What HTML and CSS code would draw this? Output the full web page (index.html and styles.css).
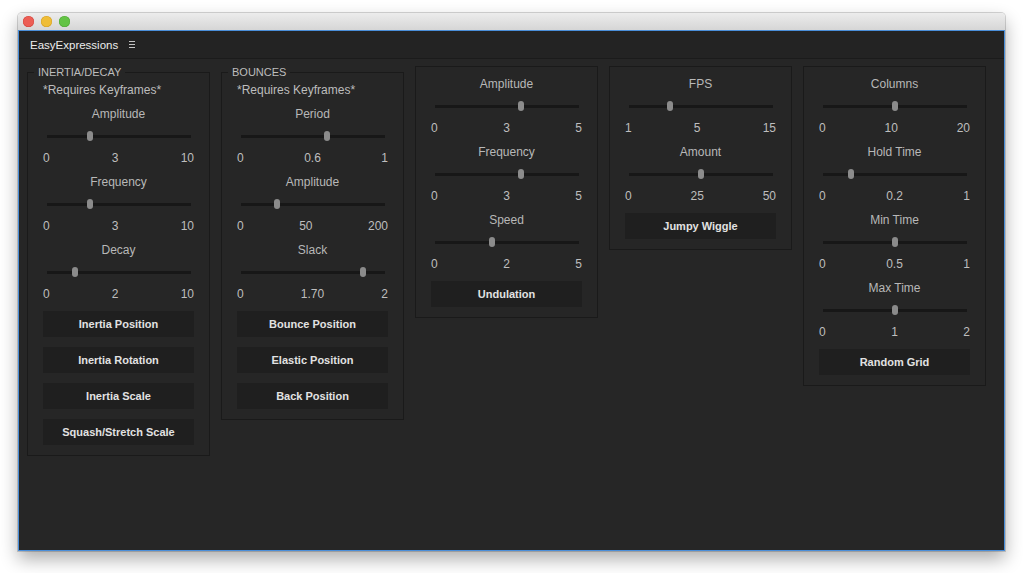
FILE: index.html
```html
<!DOCTYPE html>
<html lang="en">
<head>
<meta charset="utf-8">
<title>EasyExpressions</title>
<link rel="stylesheet" href="styles.css">
</head>
<body>
<div class="window">
  <div class="titlebar">
    <span class="light light--red"></span>
    <span class="light light--yellow"></span>
    <span class="light light--green"></span>
  </div>
  <div class="panel">
    <div class="panel-header">
      <span class="panel-title">EasyExpressions</span>
      <svg class="menu-icon" width="6" height="7" viewBox="0 0 6 7"><path d="M0 .5h6M0 3.5h6M0 6.5h6" stroke="#c4c4c4" stroke-width="1"/></svg>
    </div>
    <div class="panel-body">

      <fieldset class="group group--legend">
        <legend>INERTIA/DECAY</legend>
        <div class="note">*Requires Keyframes*</div>
        <div class="sliders">
          <div class="slider">
            <div class="slider-label">Amplitude</div>
            <div class="slider-track-wrap"><div class="slider-track"><span class="slider-thumb" style="left:30%"></span></div></div>
            <div class="slider-scale"><span>0</span><span>3</span><span>10</span></div>
          </div>
          <div class="slider">
            <div class="slider-label">Frequency</div>
            <div class="slider-track-wrap"><div class="slider-track"><span class="slider-thumb" style="left:30%"></span></div></div>
            <div class="slider-scale"><span>0</span><span>3</span><span>10</span></div>
          </div>
          <div class="slider">
            <div class="slider-label">Decay</div>
            <div class="slider-track-wrap"><div class="slider-track"><span class="slider-thumb" style="left:20%"></span></div></div>
            <div class="slider-scale"><span>0</span><span>2</span><span>10</span></div>
          </div>
        </div>
        <div class="buttons">
          <button class="btn">Inertia Position</button>
          <button class="btn">Inertia Rotation</button>
          <button class="btn">Inertia Scale</button>
          <button class="btn">Squash/Stretch Scale</button>
        </div>
      </fieldset>

      <fieldset class="group group--legend">
        <legend>BOUNCES</legend>
        <div class="note">*Requires Keyframes*</div>
        <div class="sliders">
          <div class="slider">
            <div class="slider-label">Period</div>
            <div class="slider-track-wrap"><div class="slider-track"><span class="slider-thumb" style="left:60%"></span></div></div>
            <div class="slider-scale"><span>0</span><span>0.6</span><span>1</span></div>
          </div>
          <div class="slider">
            <div class="slider-label">Amplitude</div>
            <div class="slider-track-wrap"><div class="slider-track"><span class="slider-thumb" style="left:25%"></span></div></div>
            <div class="slider-scale"><span>0</span><span>50</span><span>200</span></div>
          </div>
          <div class="slider">
            <div class="slider-label">Slack</div>
            <div class="slider-track-wrap"><div class="slider-track"><span class="slider-thumb" style="left:85%"></span></div></div>
            <div class="slider-scale"><span>0</span><span>1.70</span><span>2</span></div>
          </div>
        </div>
        <div class="buttons">
          <button class="btn">Bounce Position</button>
          <button class="btn">Elastic Position</button>
          <button class="btn">Back Position</button>
        </div>
      </fieldset>

      <fieldset class="group">
        <div class="sliders">
          <div class="slider">
            <div class="slider-label">Amplitude</div>
            <div class="slider-track-wrap"><div class="slider-track"><span class="slider-thumb" style="left:60%"></span></div></div>
            <div class="slider-scale"><span>0</span><span>3</span><span>5</span></div>
          </div>
          <div class="slider">
            <div class="slider-label">Frequency</div>
            <div class="slider-track-wrap"><div class="slider-track"><span class="slider-thumb" style="left:60%"></span></div></div>
            <div class="slider-scale"><span>0</span><span>3</span><span>5</span></div>
          </div>
          <div class="slider">
            <div class="slider-label">Speed</div>
            <div class="slider-track-wrap"><div class="slider-track"><span class="slider-thumb" style="left:40%"></span></div></div>
            <div class="slider-scale"><span>0</span><span>2</span><span>5</span></div>
          </div>
        </div>
        <div class="buttons">
          <button class="btn">Undulation</button>
        </div>
      </fieldset>

      <fieldset class="group">
        <div class="sliders">
          <div class="slider">
            <div class="slider-label">FPS</div>
            <div class="slider-track-wrap"><div class="slider-track"><span class="slider-thumb" style="left:28.57%"></span></div></div>
            <div class="slider-scale"><span>1</span><span>5</span><span>15</span></div>
          </div>
          <div class="slider">
            <div class="slider-label">Amount</div>
            <div class="slider-track-wrap"><div class="slider-track"><span class="slider-thumb" style="left:50%"></span></div></div>
            <div class="slider-scale"><span>0</span><span>25</span><span>50</span></div>
          </div>
        </div>
        <div class="buttons">
          <button class="btn">Jumpy Wiggle</button>
        </div>
      </fieldset>

      <fieldset class="group">
        <div class="sliders">
          <div class="slider">
            <div class="slider-label">Columns</div>
            <div class="slider-track-wrap"><div class="slider-track"><span class="slider-thumb" style="left:50%"></span></div></div>
            <div class="slider-scale"><span>0</span><span>10</span><span>20</span></div>
          </div>
          <div class="slider">
            <div class="slider-label">Hold Time</div>
            <div class="slider-track-wrap"><div class="slider-track"><span class="slider-thumb" style="left:20%"></span></div></div>
            <div class="slider-scale"><span>0</span><span>0.2</span><span>1</span></div>
          </div>
          <div class="slider">
            <div class="slider-label">Min Time</div>
            <div class="slider-track-wrap"><div class="slider-track"><span class="slider-thumb" style="left:50%"></span></div></div>
            <div class="slider-scale"><span>0</span><span>0.5</span><span>1</span></div>
          </div>
          <div class="slider">
            <div class="slider-label">Max Time</div>
            <div class="slider-track-wrap"><div class="slider-track"><span class="slider-thumb" style="left:50%"></span></div></div>
            <div class="slider-scale"><span>0</span><span>1</span><span>2</span></div>
          </div>
        </div>
        <div class="buttons">
          <button class="btn">Random Grid</button>
        </div>
      </fieldset>

    </div>
  </div>
</div>
</body>
</html>
```
FILE: styles.css
```css
* { box-sizing: border-box; }

html, body {
  margin: 0;
  padding: 0;
  background: #ffffff;
}

body {
  font-family: "Liberation Sans", Arial, sans-serif;
  padding: 13px 0 0 18px;
  min-height: 573px;
}

.window {
  width: 987px;
  border-radius: 4px 4px 0 0;
  box-shadow: 0 0 0 1px rgba(0, 0, 0, 0.16), 0 8px 18px rgba(0, 0, 0, 0.33);
}

.titlebar {
  height: 17px;
  display: flex;
  align-items: center;
  gap: 7px;
  padding-left: 5px;
  border-radius: 4px 4px 0 0;
  background: linear-gradient(#ececec, #d6d6d6);
}

.light {
  width: 11px;
  height: 11px;
  border-radius: 50%;
}
.light--red { background: #ec5e55; box-shadow: inset 0 0 0 0.5px #d2433b; }
.light--yellow { background: #efbd37; box-shadow: inset 0 0 0 0.5px #d49f22; }
.light--green { background: #63c345; box-shadow: inset 0 0 0 0.5px #4ea734; }

.panel {
  height: 521px;
  border: 1px solid #4a8ed9;
  background: #262626;
  display: flex;
  flex-direction: column;
}

.panel-header {
  height: 28px;
  flex: none;
  display: flex;
  align-items: center;
  gap: 11px;
  padding-left: 11px;
  background: #232323;
  border-bottom: 1px solid #1b1b1b;
}

.panel-title {
  font-size: 11.5px;
  color: #ececec;
}

.menu-icon { display: block; }

.panel-body {
  display: flex;
  align-items: flex-start;
  gap: 11px;
  padding: 7px 8px;
}

.group {
  width: 183px;
  min-width: 0;
  margin: 0;
  padding: 7px 15px 10px;
  border: 1px solid #1a1a1a;
  flex: none;
}

.group--legend { padding-top: 0; }

.group legend {
  font-size: 11px;
  line-height: 12px;
  color: #bdbdbd;
  padding: 0 4px;
  margin-left: -9px;
}

.note {
  font-size: 12px;
  line-height: 24px;
  color: #bdbdbd;
  margin-bottom: 2px;
  white-space: nowrap;
}

.sliders {
  display: flex;
  flex-direction: column;
  gap: 4px;
}

.slider-label {
  font-size: 12px;
  line-height: 20px;
  height: 20px;
  text-align: center;
  color: #b8b8b8;
}

.slider-track-wrap {
  height: 24px;
  display: flex;
  align-items: center;
  justify-content: center;
}

.slider-track {
  position: relative;
  width: 144px;
  height: 3px;
  background: #171717;
}

.slider-thumb {
  position: absolute;
  top: 50%;
  width: 6px;
  height: 10px;
  border-radius: 3px;
  background: #8b8b8b;
  transform: translate(-50%, -50%);
}

.slider-scale {
  display: flex;
  justify-content: space-between;
  font-size: 12px;
  line-height: 20px;
  height: 20px;
  color: #bebebe;
}

.buttons {
  display: flex;
  flex-direction: column;
  gap: 10px;
  margin-top: 7px;
}

.btn {
  display: block;
  width: 100%;
  height: 26px;
  margin: 0;
  padding: 0;
  border: none;
  border-radius: 0;
  background: #1f1f1f;
  color: #e2e2e2;
  font-family: "Liberation Sans", Arial, sans-serif;
  font-size: 11px;
  font-weight: bold;
  text-align: center;
}
```
